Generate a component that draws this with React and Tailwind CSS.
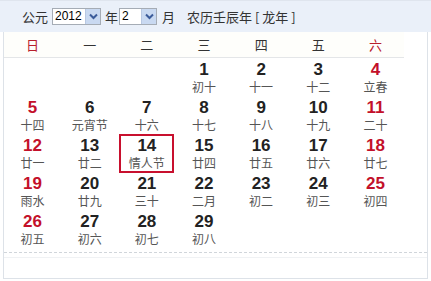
import React from "react";

const weeks = [
  [null, null, null, ["1", "初十"], ["2", "十一"], ["3", "十二"], ["4", "立春"]],
  [["5", "十四"], ["6", "元宵节"], ["7", "十六"], ["8", "十七"], ["9", "十八"], ["10", "十九"], ["11", "二十"]],
  [["12", "廿一"], ["13", "廿二"], ["14", "情人节"], ["15", "廿四"], ["16", "廿五"], ["17", "廿六"], ["18", "廿七"]],
  [["19", "雨水"], ["20", "廿九"], ["21", "三十"], ["22", "二月"], ["23", "初二"], ["24", "初三"], ["25", "初四"]],
  [["26", "初五"], ["27", "初六"], ["28", "初七"], ["29", "初八"], null, null, null],
];

const heads = ["日", "一", "二", "三", "四", "五", "六"];

function Select({ value, w }) {
  return (
    <div className={`flex h-[17px] border border-[#a5acb5] bg-white ${w}`}>
      <div className="flex-1 pl-[2px] text-[12px] leading-[15px] text-black" style={{ fontFamily: '"Liberation Sans", Arial, sans-serif' }}>
        {value}
      </div>
      <div className="w-[15px] h-[15px] bg-[#c9d9f1] border-l border-[#b8c8e2] flex items-center justify-center">
        <svg width="9" height="7" viewBox="0 0 9 7">
          <path d="M1 1.5 L4.5 5 L8 1.5" stroke="#3b5b9a" strokeWidth="2" fill="none" />
        </svg>
      </div>
    </div>
  );
}

export default function App() {
  const cjk = { fontFamily: '"Noto Sans CJK SC", "Noto Sans", sans-serif' };
  const num = { fontFamily: '"Liberation Sans", Arial, sans-serif' };
  return (
    <div className="w-[431px] h-[281px] bg-white relative overflow-hidden" style={cjk}>
      <div className="h-[32px] bg-[#eaf0f9] border-t border-[#dfe5ee] flex items-center text-[13px] text-[#333]">
        <span className="ml-[22px]">公元</span>
        <div className="ml-[4px]"><Select value="2012" w="w-[49px]" /></div>
        <span className="ml-[4px]">年</span>
        <div className="ml-[1px]"><Select value="2" w="w-[38px]" /></div>
        <span className="ml-[5px]">月</span>
        <span className="ml-[12px]">农历壬辰年 [ 龙年 ]</span>
      </div>
      <div className="ml-[3px] mr-[3px] h-[247px] border-l border-r border-b border-[#dde2e8] flex flex-col">
        <div className="grid grid-cols-7 w-[400px] h-[26px] items-center text-[13px] border-b border-[#e4e6e8] bg-[#fefefb]">
          {heads.map((h, i) => (
            <div key={h} className={`text-center ${i === 0 || i === 6 ? "text-[#b8202c]" : "text-[#333]"}`}>{h}</div>
          ))}
        </div>
        <div className="flex flex-col w-[400px] pt-[1px]">
          {weeks.map((row, ri) => (
            <div key={ri} className="grid grid-cols-7 h-[38px]">
              {row.map((c, ci) => {
                const red = ci === 0 || ci === 6;
                const sel = c && c[0] === "14";
                return (
                  <div key={ci} className="flex justify-center">
                    {c && (
                      <div className={`flex flex-col items-center w-[55px] h-[39px] ${sel ? "border-2 border-[#c8102e] -mt-[1px]" : "border-2 border-transparent -mt-[1px]"}`}>
                        <div className={`text-[17px] font-bold leading-[18px] mt-[1px] ${red ? "text-[#c3102a]" : "text-[#222]"}`} style={num}>{c[0]}</div>
                        <div className="text-[12px] leading-[15px] text-[#555]">{c[1]}</div>
                      </div>
                    )}
                  </div>
                );
              })}
            </div>
          ))}
        </div>
        <div className="mt-[3px] border-t border-dashed border-[#d0d5da]" />
        <div className="mt-[4px] border-t border-[#f0f2f4]" />
      </div>
    </div>
  );
}
